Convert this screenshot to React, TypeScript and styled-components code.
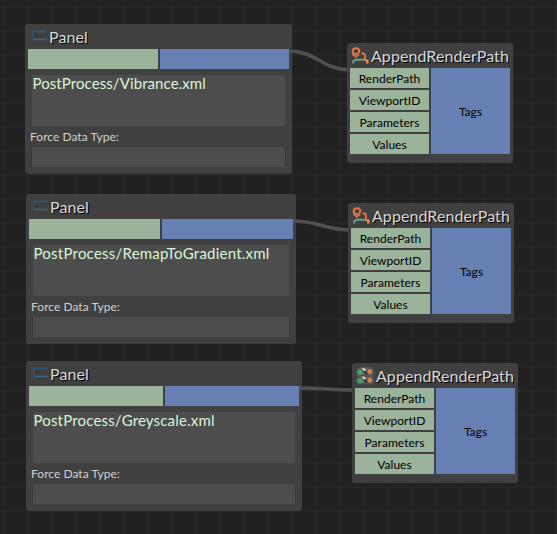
import React from "react";
import styled, { createGlobalStyle } from "styled-components";

const GlobalStyle = createGlobalStyle`
  body { margin: 0; background: #222222; }
  * { box-sizing: border-box; }
`;

const Canvas = styled.main`
  position: relative;
  width: 557px;
  height: 534px;
  overflow: hidden;
  font-family: Lato, "Open Sans", sans-serif;
  background-color: #212121;
  background-image:
    linear-gradient(90deg, #262626 2px, transparent 2px),
    linear-gradient(#262626 2px, transparent 2px);
  background-size: 24px 24px;
  background-position: 3px 6px;
`;

const Wires = styled.svg`
  position: absolute;
  inset: 0;
  fill: none;
  stroke: #505050;
  stroke-width: 3.6;
`;

const Node = styled.section<{ $x: number; $y: number; $w: number; $h: number }>`
  position: absolute;
  left: ${(p) => p.$x}px;
  top: ${(p) => p.$y}px;
  width: ${(p) => p.$w}px;
  height: ${(p) => p.$h}px;
  padding: 0 3px;
  border-radius: 3px;
  background: #404040;
`;

const Header = styled.header<{ $indent: number }>`
  display: flex;
  height: 25px;
  padding-left: ${(p) => p.$indent}px;
`;

const IconSlot = styled.span<{ $w: number }>`
  flex: none;
  width: ${(p) => p.$w}px;
  height: 25px;
  svg { display: block; }
`;

const Title = styled.h2<{ $spacing: number }>`
  margin: 0;
  font-size: 16px;
  font-weight: 400;
  line-height: 26px;
  letter-spacing: ${(p) => p.$spacing}px;
  white-space: nowrap;
  color: #d9d9d9;
  text-shadow: 1px 1px 0 #000;
`;

const Ports = styled.div`
  display: grid;
  grid-template-columns: 1fr 1fr;
  gap: 2px;
`;

const PortColumn = styled.div`
  display: grid;
  grid-auto-rows: 20px;
  gap: 2px;
`;

const Port = styled.div<{ $kind: "in" | "out" }>`
  display: flex;
  align-items: center;
  justify-content: center;
  min-height: 20px;
  padding-top: 2px;
  font-size: 12px;
  line-height: 18px;
  letter-spacing: 0.03px;
  color: #000;
  background: ${(p) => (p.$kind === "in" ? "#9bb29b" : "#6680b3")};
`;

const TextArea = styled.div`
  height: 51px;
  margin: 6px 4px 0;
  padding-left: 0.5px;
  border-radius: 1px;
  font-size: 15px;
  line-height: 17px;
  white-space: nowrap;
  color: #d9f5d9;
  background: #4d4d4d;
`;

const Value = styled.span<{ $spacing: number }>`
  letter-spacing: ${(p) => p.$spacing}px;
`;

const FieldLabel = styled.div`
  height: 21px;
  padding-left: 2px;
  font-size: 12px;
  line-height: 21px;
  letter-spacing: 0.03px;
  color: #d0d0d0;
`;

const Input = styled.div`
  height: 20px;
  margin: 0 3px;
  border: solid #383838;
  border-width: 0 1px;
  border-radius: 1px;
  background: #4c4c4c;
`;

const PanelIcon = () => (
  <svg width="17" height="25" viewBox="0 0 17 25" fill="none">
    <path d="M15 7.5H2.5Q.5 7.5.5 9v5q0 1.5 2 1.5" stroke="#29587f" strokeWidth="1.4" />
    <path d="M1.5 15.5H15" stroke="#38658a" strokeWidth="1.4" />
    <path d="M3.5 9.5v4" stroke="#303234" />
    <path d="M5.5 10v3" stroke="#35383a" />
  </svg>
);

const PathIcon = () => (
  <svg width="20" height="25" viewBox="0 0 20 25" fill="none">
    <path d="M2 20.5q0-3.4 3-3.8h9" stroke="#6e9c84" strokeWidth="1.9" />
    <ellipse cx="5" cy="8.2" rx="3.3" ry="3" stroke="#e8763f" strokeWidth="2" />
    <path d="M1.8 8v3q.2 2 3 2.2l3.4-1M4.8 13v2" stroke="#dc7543" strokeWidth="1.5" />
    <path d="M10.5 10.5h2.2q1.3.4 1.3 2.4v3.4q.3 1.2 2 1.3" stroke="#e8763f" strokeWidth="1.9" />
    <path d="M16.3 16.5v4" stroke="#f58a4b" strokeWidth="2.4" />
  </svg>
);

const NodesIcon = () => (
  <svg width="20" height="25" viewBox="0 0 20 25" fill="none">
    <rect x="0.5" y="4" width="17.5" height="17.5" rx="3" fill="#53504d" />
    {[4, 12.5].map((y) => (
      <g key={y} transform={`translate(0 ${y})`}>
        <path d="M2 3l5-2 7 2M5 6h7" stroke="#77716c" />
        <path d="M8 4.5l3 2.5" stroke="#2b2b2b" strokeWidth="1.5" />
        <path d="M6.5 1.6l3 1.8" stroke="#d6d2cf" strokeWidth="2" />
        <ellipse cx="4" cy="5.3" rx="3.2" ry="2.6" fill="#449b65" />
        <ellipse cx="13.9" cy="4.7" rx="2.3" ry="2.7" fill="#da7a52" />
      </g>
    ))}
  </svg>
);

interface PanelProps { x: number; y: number; w: number; value: string; spacing: number }

const PanelNode = ({ x, y, w, value, spacing }: PanelProps) => (
  <Node $x={x} $y={y} $w={w} $h={150}>
    <Header $indent={4}>
      <IconSlot $w={17}><PanelIcon /></IconSlot>
      <Title $spacing={0.1}>Panel</Title>
    </Header>
    <Ports>
      <Port $kind="in" />
      <Port $kind="out" />
    </Ports>
    <TextArea><Value $spacing={spacing}>{value}</Value></TextArea>
    <FieldLabel>Force Data Type:</FieldLabel>
    <Input />
  </Node>
);

const inputs = ["RenderPath", "ViewportID", "Parameters", "Values"];

const AppendNode = ({ x, y, icon }: { x: number; y: number; icon: React.ReactNode }) => (
  <Node $x={x} $y={y} $w={166} $h={120}>
    <Header $indent={1}>
      <IconSlot $w={20}>{icon}</IconSlot>
      <Title $spacing={0.07}>AppendRenderPath</Title>
    </Header>
    <Ports>
      <PortColumn>
        {inputs.map((name) => <Port key={name} $kind="in">{name}</Port>)}
      </PortColumn>
      <Port $kind="out">Tags</Port>
    </Ports>
  </Node>
);

export default function App() {
  return (
    <>
      <GlobalStyle />
      <Canvas>
        <PanelNode x={25} y={24} w={267} value="PostProcess/Vibrance.xml" spacing={0.08} />
        <PanelNode x={26} y={194} w={270} value="PostProcess/RemapToGradient.xml" spacing={0.23} />
        <PanelNode x={26} y={361} w={276} value="PostProcess/Greyscale.xml" spacing={0.17} />
        <Wires width="557" height="534">
          <path d="M289 51C316 51 323 70 350 70" />
          <path d="M293 221C318 221 326 230 351 230" />
          <path d="M299 388C321 388 333 390 355 390" />
        </Wires>
        <AppendNode x={347} y={43} icon={<PathIcon />} />
        <AppendNode x={348} y={203} icon={<PathIcon />} />
        <AppendNode x={352} y={363} icon={<NodesIcon />} />
      </Canvas>
    </>
  );
}
